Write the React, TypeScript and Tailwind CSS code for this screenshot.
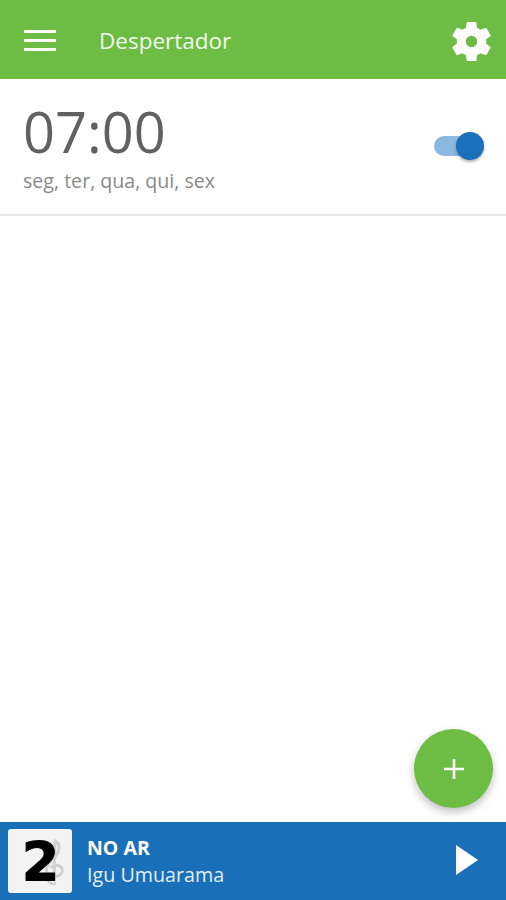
import React from 'react';

const font = { fontFamily: '"Open Sans", "Noto Sans", sans-serif' };

function Gear() {
  return (
    <svg width="49" height="49" viewBox="0 0 24 24" fill="#ffffff">
      <path d="M19.14 12.94c.04-.3.06-.61.06-.94 0-.32-.02-.64-.07-.94l2.03-1.58a.49.49 0 0 0 .12-.61l-1.92-3.32a.49.49 0 0 0-.59-.22l-2.39.96c-.5-.38-1.03-.7-1.62-.94l-.36-2.54a.48.48 0 0 0-.48-.41h-3.84a.48.48 0 0 0-.47.41l-.36 2.54c-.59.24-1.13.57-1.62.94l-2.39-.96a.48.48 0 0 0-.59.22L2.74 8.87a.48.48 0 0 0 .12.61l2.03 1.58c-.05.3-.09.63-.09.94s.02.64.07.94l-2.03 1.58a.49.49 0 0 0-.12.61l1.92 3.32c.12.22.37.29.59.22l2.39-.96c.5.38 1.03.7 1.62.94l.36 2.54c.05.24.24.41.48.41h3.84c.24 0 .44-.17.47-.41l.36-2.54c.59-.24 1.13-.56 1.62-.94l2.39.96c.22.08.47 0 .59-.22l1.92-3.32a.48.48 0 0 0-.12-.61l-2.01-1.58zM12 14.8a2.8 2.8 0 1 1 0-5.6 2.8 2.8 0 0 1 0 5.6z" />
    </svg>
  );
}

function StationLogo() {
  return (
    <div className="w-[64px] h-[64px] bg-[#f3f3f3] rounded-[3px] relative flex items-center justify-center overflow-hidden shrink-0">
      {/* faint clef behind the number */}
      <svg className="absolute left-[34px] top-[8px]" width="26" height="50" viewBox="0 0 26 50" fill="none" stroke="#d2d2d2" strokeWidth="3">
        <path d="M14 46c-6 3-10-3-5-5M12 44L13 4c5 2 6 9 0 16C7 26 3 30 5 36c2 5 13 5 15-1 2-6-8-10-11-4" />
      </svg>
      <span className="relative text-[54px] leading-none text-black ml-[1px] mt-[1px]" style={{ fontFamily: '"DejaVu Sans", sans-serif', fontWeight: 700, WebkitTextStroke: '1px #000' }}>
        2
      </span>
    </div>
  );
}

export default function App() {
  return (
    <div className="w-[506px] h-[900px] flex flex-col bg-white overflow-hidden relative" style={font}>
      <header className="h-[79px] bg-[#6dbd45] flex items-center shrink-0">
        <div className="w-[99px] pl-[24px] flex flex-col gap-[6px] mt-[2px] shrink-0">
          <div className="w-[32px] h-[3px] bg-white" />
          <div className="w-[32px] h-[3px] bg-white" />
          <div className="w-[32px] h-[3px] bg-white" />
        </div>
        <h1 className="flex-1 text-[22.5px] text-[#f1f9ec] mt-[3px]">Despertador</h1>
        <div className="pr-[10px] mt-[3px]">
          <Gear />
        </div>
      </header>

      <div className="h-[137px] border-b-2 border-[#e6e6e6] flex items-center justify-between pl-[24px] pr-[22px] shrink-0">
        <div className="self-start pt-[24px]">
          <div className="text-[56px] leading-[56px] text-[#616161] -ml-[1px]">07:00</div>
          <div className="text-[19.6px] leading-[26px] text-[#8a8a8a] mt-[9px] -ml-[1px]">seg, ter, qua, qui, sex</div>
        </div>
        <div className="relative w-[50px] h-[28px] flex items-center -mt-[1px]">
          <div className="w-[44px] h-[20px] rounded-full bg-[#8bb8e0]" />
          <div className="absolute right-0 top-0 w-[28px] h-[28px] rounded-full bg-[#1a70bb] shadow-[0_2px_3px_rgba(0,0,0,0.3)]" />
        </div>
      </div>

      <div className="flex-1" />

      <button className="absolute left-[414px] top-[729px] w-[79px] h-[79px] rounded-full bg-[#6dbd45] flex items-center justify-center shadow-[0_4px_8px_rgba(0,0,0,0.25)]">
        <svg width="24" height="24" viewBox="0 0 24 24" stroke="#ffffff" strokeWidth="2.6" fill="none">
          <path d="M12 2v20M2 12h20" />
        </svg>
      </button>

      <footer className="h-[78px] bg-[#1a70b8] flex items-center pl-[8px] pr-[28px] shrink-0">
        <StationLogo />
        <div className="flex-1 pl-[15px] text-white">
          <div className="text-[19.5px] leading-[26px] font-bold">NO AR</div>
          <div className="text-[19.7px] leading-[26px] text-[#e3eef7] mt-[1px]">Igu Umuarama</div>
        </div>
        <svg width="22" height="30" viewBox="0 0 22 30" fill="#ffffff" className="-mt-[2px]">
          <path d="M0 0L22 15L0 30z" />
        </svg>
      </footer>
    </div>
  );
}
